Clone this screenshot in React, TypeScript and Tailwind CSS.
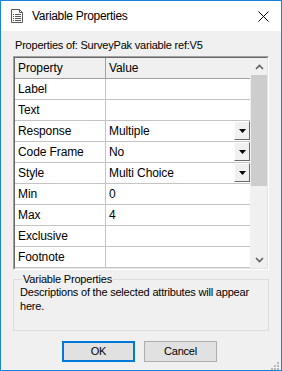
import React from "react";

type Row = { name: string; value?: string; combo?: boolean };

const rows: Row[] = [
  { name: "Label" },
  { name: "Text" },
  { name: "Response", value: "Multiple", combo: true },
  { name: "Code Frame", value: "No", combo: true },
  { name: "Style", value: "Multi Choice", combo: true },
  { name: "Min", value: "0" },
  { name: "Max", value: "4" },
  { name: "Exclusive" },
  { name: "Footnote" },
];

// Little form icon in the caption bar
const FormIcon = () => (
  <svg width="16" height="16" viewBox="0 0 16 16" className="shrink-0">
    <path d="M2.5 1.5h8l3 3v10h-11z" fill="#fff" stroke="#5a5a5a" />
    <path d="M10.5 1.5v3h3" fill="none" stroke="#5a5a5a" />
    {[6, 8, 10, 12].map((y) => (
      <g key={y}>
        <rect x="4" y={y} width="1" height="1" fill="#5a5a5a" />
        <rect x="6" y={y} width="6" height="1" fill="#5a5a5a" />
      </g>
    ))}
  </svg>
);

const ComboButton = () => (
  <div className="absolute right-0 top-0 flex h-[19px] w-[16px] items-center justify-center border border-t-white border-l-white border-r-[#696969] border-b-[#696969] bg-[#f0f0f0]">
    <svg width="7" height="4" viewBox="0 0 7 4">
      <path d="M0 0h7L3.5 4z" fill="#000" />
    </svg>
  </div>
);

const Chevron = ({ up }: { up?: boolean }) => (
  <svg width="9" height="6" viewBox="0 0 9 6">
    <path
      d={up ? "M1 5l3.5-3.5L8 5" : "M1 1l3.5 3.5L8 1"}
      fill="none"
      stroke="#606060"
      strokeWidth="1.6"
    />
  </svg>
);

export default function App() {
  return (
    <div
      className="flex h-[371px] w-[282px] flex-col border border-[#1883d7] bg-[#f0f0f0] text-[11px] tracking-[-0.2px] text-black"
      style={{ fontFamily: '"Liberation Sans", Arial, sans-serif' }}
    >
      {/* Caption */}
      <div className="flex h-[30px] shrink-0 items-center bg-white pl-[8px] pr-[12px]">
        <FormIcon />
        <span className="ml-[7px] flex-1 text-[12px] leading-none tracking-[-0.3px]">Variable Properties</span>
        <svg width="11" height="11" viewBox="0 0 11 11">
          <path d="M0.5 0.5l10 10M10.5 0.5l-10 10" stroke="#000" strokeWidth="1" />
        </svg>
      </div>

      <div className="flex flex-1 flex-col px-[12px]">
        <div className="mt-[4px] h-[21px] pl-[2px] leading-[21px]">
          Properties of: SurveyPak variable ref:V5
        </div>

        {/* Property grid */}
        <div className="border border-t-[#a0a0a0] border-l-[#a0a0a0] border-r-white border-b-white text-[12px] tracking-[-0.1px]">
          <div className="flex border border-t-[#696969] border-l-[#696969] border-r-[#e3e3e3] border-b-[#e3e3e3]">
            <div className="flex-1">
              <div className="flex h-[21px] border-b border-[#a0a0a0] bg-[#f0f0f0] leading-[20px]">
                <div className="w-[91px] border-r border-[#a0a0a0] pl-[3px]">Property</div>
                <div className="flex-1 pl-[3px]">Value</div>
              </div>
              {rows.map((r) => (
                <div key={r.name} className="flex h-[21px] border-b border-[#c4c4c4] bg-white leading-[20px]">
                  <div className="w-[91px] border-r border-[#c4c4c4] pl-[3px]">{r.name}</div>
                  <div className="relative flex-1 pl-[3px]">
                    {r.value}
                    {r.combo && <ComboButton />}
                  </div>
                </div>
              ))}
            </div>

            {/* Scrollbar */}
            <div className="flex w-[17px] flex-col border-l border-[#f0f0f0] bg-[#f0f0f0]">
              <div className="flex h-[17px] items-center justify-center">
                <Chevron up />
              </div>
              <div className="h-[111px] w-full bg-[#cdcdcd]" />
              <div className="flex-1" />
              <div className="flex h-[17px] items-center justify-center">
                <Chevron />
              </div>
            </div>
          </div>
        </div>

        {/* Description group box */}
        <div className="relative mt-[9px] h-[52px] border border-[#dcdcdc] px-[6px] pt-[4px] leading-[14px]">
          <span className="absolute -top-[8px] left-[8px] bg-[#f0f0f0] px-[1px] leading-[14px]">
            Variable Properties
          </span>
          <p className="pt-[1px]">Descriptions of the selected attributes will appear here.</p>
        </div>

        {/* Buttons */}
        <div className="mt-[10px] flex justify-center gap-[9px] pr-[3px]">
          <button className="h-[21px] w-[73px] border-2 border-[#0078d7] bg-[#e1e1e1] leading-none">OK</button>
          <button className="h-[21px] w-[73px] border border-[#adadad] bg-[#e1e1e1] leading-none">Cancel</button>
        </div>

        <div className="mt-auto mb-[2px] flex justify-end">
          <svg width="8" height="8" viewBox="0 0 8 8" className="-mr-[10px]">
            {[
              [6, 0],
              [3, 3],
              [6, 3],
              [0, 6],
              [3, 6],
              [6, 6],
            ].map(([x, y]) => (
              <rect key={`${x}-${y}`} x={x} y={y} width="2" height="2" fill="#b8b8b8" />
            ))}
          </svg>
        </div>
      </div>
    </div>
  );
}
